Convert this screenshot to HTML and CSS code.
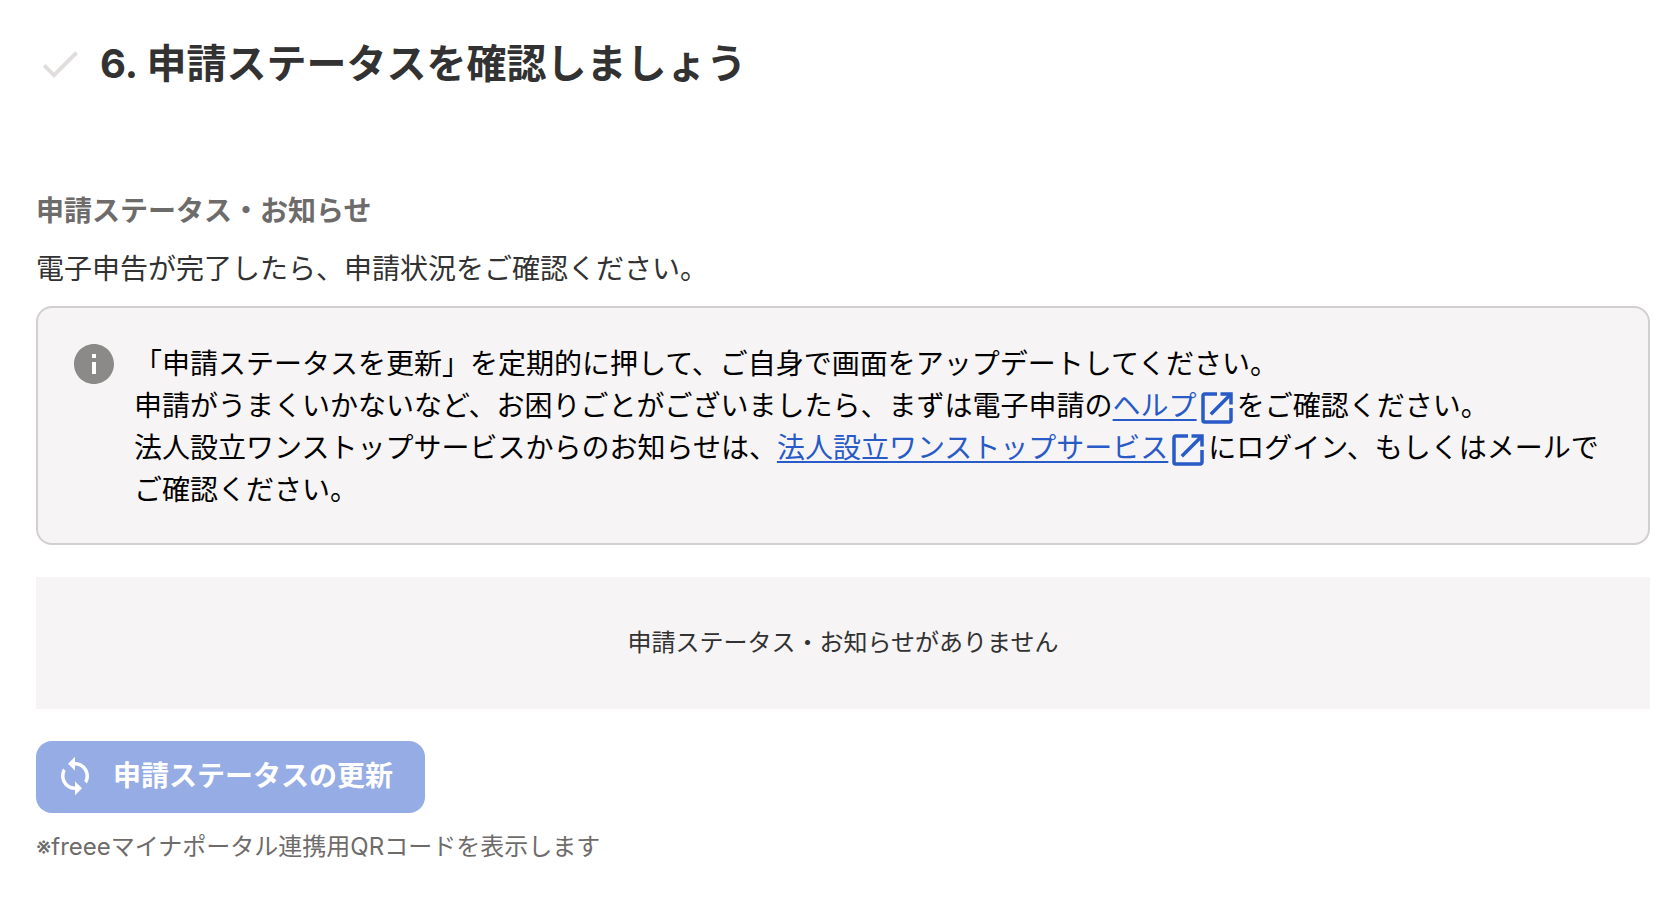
FILE: index.html
```
<!DOCTYPE html>
<html lang="ja">
<head>
  <meta charset="UTF-8">
  <meta name="viewport" content="width=device-width, initial-scale=1.0">
  <title>申請ステータスを確認しましょう</title>
  <link rel="stylesheet" href="styles.css">
</head>
<body>
  <main class="container">
    <div class="header">
      <svg class="icon-check" viewBox="0 0 24 24" aria-hidden="true"><path d="M9 16.2L4.8 12l-1.4 1.4L9 19 21 7l-1.4-1.4L9 16.2z"/></svg>
      <h1>6. 申請ステータスを確認しましょう</h1>
    </div>

    <section class="status">
      <h2>申請ステータス・お知らせ</h2>
      <p class="lead">電子申告が完了したら、申請状況をご確認ください。</p>

      <div class="info-box">
        <svg class="icon-info" viewBox="0 0 24 24" aria-hidden="true"><path d="M12 2C6.48 2 2 6.48 2 12s4.48 10 10 10 10-4.48 10-10S17.52 2 12 2zm1 15h-2v-6h2v6zm0-8h-2V7h2v2z"/><path class="icon-info-mark" d="M11 7h2v2h-2zM11 11h2v6h-2z"/></svg>
        <p class="info-text">
          「申請ステータスを更新」を定期的に押して、ご自身で画面をアップデートしてください。<br>
          申請がうまくいかないなど、お困りごとがございましたら、まずは電子申請の<a href="#help">ヘルプ</a><svg class="icon-open" viewBox="0 0 24 24" aria-hidden="true"><path d="M19 19H5V5h7V3H5c-1.11 0-2 .9-2 2v14a2 2 0 002 2h14c1.1 0 2-.9 2-2v-7h-2v7zM14 3v2h3.59l-9.83 9.83 1.41 1.41L19 6.41V10h2V3h-7z"/></svg>をご確認ください。<br>
          法人設立ワンストップサービスからのお知らせは、<a href="#onestop">法人設立ワンストップサービス</a><svg class="icon-open" viewBox="0 0 24 24" aria-hidden="true"><path d="M19 19H5V5h7V3H5c-1.11 0-2 .9-2 2v14a2 2 0 002 2h14c1.1 0 2-.9 2-2v-7h-2v7zM14 3v2h3.59l-9.83 9.83 1.41 1.41L19 6.41V10h2V3h-7z"/></svg>にログイン、もしくはメールでご確認ください。
        </p>
      </div>

      <div class="empty">申請ステータス・お知らせがありません</div>

      <button type="button" class="btn" disabled>
        <svg class="icon-sync" viewBox="0 0 24 24" aria-hidden="true"><path d="M12 4V1L8 5l4 4V6c3.31 0 6 2.69 6 6 0 1.01-.25 1.97-.7 2.8l1.46 1.46C19.54 15.03 20 13.57 20 12c0-4.42-3.58-8-8-8zm0 14c-3.31 0-6-2.69-6-6 0-1.01.25-1.97.7-2.8L5.24 7.74C4.46 8.97 4 10.43 4 12c0 4.42 3.58 8 8 8v3l4-4-4-4v3z"/></svg>
        申請ステータスの更新
      </button>
      <p class="note">※freeeマイナポータル連携用QRコードを表示します</p>
    </section>
  </main>
</body>
</html>
```
FILE: styles.css
```
* {
  box-sizing: border-box;
}

body {
  margin: 0;
  background: #fff;
  color: #323232;
  font-family: Inter, "Noto Sans CJK JP", sans-serif;
  font-size: 28px;
  line-height: 42px;
}

h1, h2, p {
  margin: 0;
}

.container {
  padding: 34px 30px 30px 36px;
}

.header {
  display: flex;
  align-items: center;
  gap: 16px;
  margin-bottom: 96px;
}

.header h1 {
  font-size: 40px;
  line-height: 60px;
  font-weight: bold;
}

.icon-check {
  flex: none;
  width: 48px;
  height: 48px;
  fill: #e1dddd;
}

.status h2 {
  color: #6e6b6b;
  font-size: 28px;
  font-weight: bold;
  margin-bottom: 16px;
}

.lead {
  margin-bottom: 16px;
}

.info-box {
  display: flex;
  align-items: flex-start;
  gap: 16px;
  padding: 32px 36px 32px 32px;
  border: 2px solid #d2cfcf;
  border-radius: 16px;
  background: #f6f4f5;
  color: #000;
}

.info-text {
  flex: 1;
  padding-top: 3px;
}

.info-text a {
  color: #285ac8;
  text-decoration: underline;
  text-decoration-thickness: 2px;
  text-underline-offset: 3px;
}

.icon-info {
  flex: none;
  width: 48px;
  height: 48px;
  fill: #8c8989;
}

.icon-info-mark {
  fill: #fff;
}

.icon-open {
  width: 42px;
  height: 42px;
  margin: -10px -1px;
  vertical-align: middle;
  fill: #285ac8;
}

.empty {
  margin: 32px 0;
  padding: 48px 24px;
  background: #f6f4f5;
  font-size: 24px;
  line-height: 36px;
  text-align: center;
}

.btn {
  display: flex;
  align-items: center;
  gap: 17px;
  padding: 14px 32px 16px 18px;
  border: none;
  border-radius: 16px;
  background: #96ace4;
  color: #fff;
  font-family: inherit;
  font-size: 28px;
  line-height: 42px;
  font-weight: bold;
}

.icon-sync {
  width: 42px;
  height: 42px;
  fill: #fff;
}

.note {
  margin-top: 16px;
  color: #6e6b6b;
  font-size: 24px;
  line-height: 36px;
}
```
